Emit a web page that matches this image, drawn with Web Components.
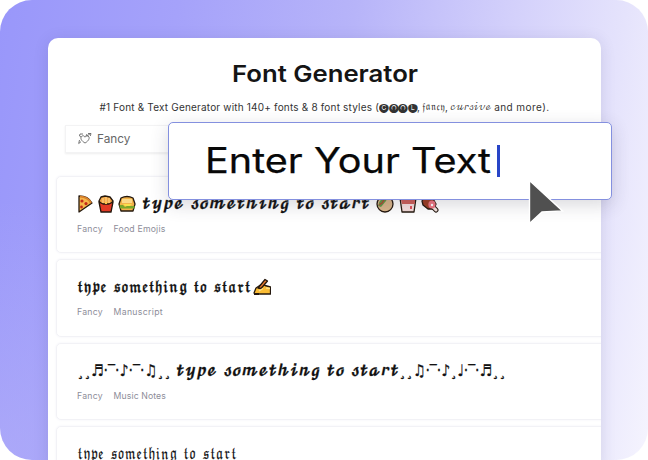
<!DOCTYPE html>
<html lang="en"><head><meta charset="utf-8"><title>Font Generator</title>
<style>html,body{margin:0;background:#fff}body{width:648px;height:460px;overflow:hidden}</style></head>
<body><font-generator></font-generator>
<script>
// Text fitted to a fixed width, by letter spacing or by horizontal scaling.
class FitText extends HTMLElement{
  constructor(){super();this.attachShadow({mode:'open'}).innerHTML=`<style>:host{display:block;flex:none;white-space:pre}span{display:inline-block;transform-origin:0 50%}</style><span><slot></slot></span>`}
  connectedCallback(){requestAnimationFrame(()=>this.fit());this.fit()}
  fit(){const s=this.shadowRoot.querySelector('span'),w=+this.getAttribute('w');this.style.width=w+'px';s.style.letterSpacing='0';s.style.transform='none';
    const n=s.getBoundingClientRect().width;if(!n)return;
    if(this.hasAttribute('stretch'))s.style.transform=`scaleX(${w/n})`;
    else s.style.letterSpacing=(w-n)/([...this.textContent].length)+'px'}
}
customElements.define('fit-text',FitText);

const O='stroke="#24180e" stroke-width="1.3" stroke-linejoin="round"';
const art={
 pizza:`<path d="M2 1 Q11 1 15 8 L2 17Z" fill="#f6b64a" ${O}/><path d="M3 1.5Q11 2 14 8" fill="none" stroke="#d9822b" stroke-width="2"/><circle cx="5" cy="6" r="1.6" fill="#c32b1b"/><circle cx="9" cy="8.6" r="1.6" fill="#c32b1b"/><circle cx="4.5" cy="12" r="1.4" fill="#c32b1b"/>`,
 fries:`<path d="M2 6L4 2 8 1 13 2 16 6 13 10H5Z" fill="#f3a345" ${O}/><path d="M6 3V8M9 2V8M12 3V8" stroke="#fbd07a" stroke-width="1.3"/><path d="M2 7L6 9H12L16 7 14 17H4Z" fill="#e23a25" ${O}/><path d="M8 7H10V9H8Z" fill="#f8c94e"/>`,
 burger:`<path d="M3 3Q9 0 15 3L17 9 15 16H3L1 9Z" fill="#f3b34a" ${O}/><path d="M4 4H14V8H4Z" fill="#fbd989"/><path d="M1.5 10H5L7 12 9 11H16.5V13.5H2Z" fill="#79a829"/><path d="M5 9H14L12 11H7Z" fill="#fae04c"/>`,
 stuffed:`<circle cx="9" cy="9" r="8" fill="#d9b58a" ${O}/><path d="M2 11Q3 3 12 2L10 6 5 12Z" fill="#629644"/><path d="M3 10L6 8 8 5" stroke="#b94232" stroke-width="1.3" fill="none"/>`,
 box:`<path d="M1 3H17L15 17H3Z" fill="#f1d9d5" ${O}/><path d="M2 5H16V9H3Z" fill="#ce5f5a"/><path d="M4 9H14V15H4Z" fill="#f8dfdf"/><path d="M11 11H13V14H11Z" fill="#e04f59"/>`,
 meat:`<path d="M1 6Q4 0 11 2L15 9 13 14H7L2 10Z" fill="#9e3d22" ${O}/><path d="M12 12L15 15" stroke="#24180e" stroke-width="5" stroke-linecap="round"/><path d="M12 12L15 15" stroke="#f4e3de" stroke-width="3" stroke-linecap="round"/><ellipse cx="11" cy="9.5" rx="3.6" ry="4" fill="#ef7682"/><circle cx="11" cy="10" r="1.2" fill="#fff"/>`,
 hand:`<path d="M1 15L3 10 9 6 12 7.5 17.5 9V16H2Z" fill="#fbbd35" ${O}/><path d="M5 10L12 1.5 14.5 3 8 10.5Z" fill="#e9792c" ${O}/><path d="M6 13L10 10.5M13 10L17 10.5" stroke="#fde08a" stroke-width="1.4"/><path d="M1 16H6" stroke="#24180e" stroke-width="2"/>`
};
class PixelEmoji extends HTMLElement{connectedCallback(){this.attachShadow({mode:'open'}).innerHTML=`<style>:host{display:block;flex:none;width:18px;height:18px}svg{display:block}</style><svg width="18" height="18" viewBox="0 0 18 18">${art[this.getAttribute('kind')]}</svg>`}}
customElements.define('pixel-emoji',PixelEmoji);

class FontCard extends HTMLElement{connectedCallback(){const tag=this.getAttribute('tag');this.attachShadow({mode:'open'}).innerHTML=`<style>
:host{display:block;box-sizing:border-box;height:77.5px;width:560px;flex:none;border:1.5px solid #f2f2f6;border-radius:5px;padding:14.5px 0 0 20.5px;box-shadow:0 0 3px #f3f3f8;background:#fff}
.line{display:flex;align-items:center;height:25px}.tags{display:flex;gap:10.5px;height:12px;margin-top:6.5px;font:8.7px/12px Inter,sans-serif;color:#8d8d99}
</style><div class="line"><slot></slot></div>${tag?`<div class="tags"><fit-text w="26">Fancy</fit-text><fit-text w="${this.getAttribute('tw')}">${tag}</fit-text></div>`:''}`}}
customElements.define('font-card',FontCard);

class TextInput extends HTMLElement{connectedCallback(){this.attachShadow({mode:'open'}).innerHTML=`<style>
:host{position:absolute;left:168px;top:121.5px;width:443.5px;height:78px;box-sizing:border-box;border:1.5px solid #8490df;border-radius:5px;background:#fff;box-shadow:0 5px 18px #34344a30;display:flex;align-items:center;padding:0 0 2px 35.5px;color:#080808;font:35px/42px Inter,sans-serif;-webkit-text-stroke:.25px #080808}
fit-text{letter-spacing:1px}i{width:3px;height:32.5px;background:#2845c7;margin:3px 0 0 6.5px}</style><fit-text w="286" stretch>Enter Your Text</fit-text><i></i>`}}
customElements.define('text-input',TextInput);

class FontGenerator extends HTMLElement{connectedCallback(){this.attachShadow({mode:'open'}).innerHTML=`<style>
:host{display:block;position:relative;box-sizing:border-box;width:648px;height:460px;padding:37.5px 47.5px 0;border-radius:32px;overflow:hidden;background:radial-gradient(circle at 0 100%,#b9b5f880,transparent 260px),linear-gradient(98deg,#9997fa 0%,#a5a2fa 25%,#b7b4f9 50%,#d3d0fb 72%,#e5e3fc 88%,#f5f4fe 100%)}
main{box-sizing:border-box;width:553px;height:430px;background:#fff;border-radius:10px 10px 0 0;box-shadow:0 2px 15px #38386322;overflow:hidden;display:flex;flex-direction:column}
h1{margin:21px 0 0 184px;font:600 23.3px/30px Inter,sans-serif;color:#151515}
.sub{display:flex;margin:10px 0 0 52px;height:16px;font:10px/16px Inter,sans-serif;color:#333}
.math{font-family:"DejaVu Math TeX Gyre","DejaVu Sans",serif;font-size:9.5px}
.pick{display:flex;align-items:center;box-sizing:border-box;margin:10px 0 0 17px;height:28px;width:300px;flex:none;padding-left:12px;gap:5.5px;border:1px solid #f3f3f4;box-shadow:0 1px 2px #eee;color:#666;font:11.8px/16px Inter,sans-serif}
.list{display:flex;flex-direction:column;gap:6px;margin:23px 0 0 8px}
font-card{color:#111;font:15.5px/24px "DejaVu Math TeX Gyre","DejaVu Sans",serif}
font-card fit-text{word-spacing:3px;margin-top:1px;-webkit-text-stroke:.3px #111}
font-card .thin{-webkit-text-stroke:.15px #111}
.g{width:4.5px}font-card .music{font-family:"DejaVu Sans",sans-serif;font-size:16px}
.pointer{position:absolute;left:527px;top:178px}
</style><main><h1><fit-text w="186" stretch>Font Generator</fit-text></h1>
<div class="sub"><fit-text w="279.5">#1 Font &amp; Text Generator with 140+ fonts &amp; 8 font styles (</fit-text><fit-text w="38" stretch style="font-family:'DejaVu Sans'">🅒🅞🅞🅛</fit-text><fit-text w="5">, </fit-text><fit-text w="23" stretch class="math">𝔣𝔞𝔫𝔠𝔶</fit-text><fit-text w="5">, </fit-text><fit-text w="41" class="math" style="font-size:9px;padding-top:1px">𝒸𝓊𝓇𝓈𝒾𝓋ℯ</fit-text><fit-text w="58.5"> and more).</fit-text></div>
<div class="pick"><svg width="14" height="13" viewBox="0 0 14 13" fill="none" stroke="#666" stroke-width=".9"><path d="M7 11C3.5 9 2 6.5 3.5 4.5 5 3 6.5 4 7 5.2 8 3.5 10 3.2 11 5 11.8 7 9.5 9.8 7 11Z"/><path d="M3 5L1.5 4 2 2 5 2M1.5 8L.7 11.5 3 9.7M10 1.5H13L12.3 4M8 4L9 2M9 4L12.5 1.5"/></svg><fit-text w="33.5">Fancy</fit-text></div>
<div class="list">
<font-card tag="Food Emojis" tw="52"><pixel-emoji kind="pizza"></pixel-emoji><span style="width:2px"></span><pixel-emoji kind="fries"></pixel-emoji><span style="width:3px"></span><pixel-emoji kind="burger"></pixel-emoji><span style="width:6px"></span><fit-text w="228" stretch>𝓽𝔂𝓹𝓮 𝓼𝓸𝓶𝓮𝓽𝓱𝓲𝓷𝓰 𝓽𝓸 𝓼𝓽𝓪𝓻𝓽</fit-text><span style="width:6px"></span><pixel-emoji kind="stuffed"></pixel-emoji><span class="g"></span><pixel-emoji kind="box"></pixel-emoji><span class="g"></span><pixel-emoji kind="meat"></pixel-emoji></font-card>
<font-card tag="Manuscript" tw="49.5"><fit-text w="174" stretch>𝖙𝖞𝖕𝖊 𝖘𝖔𝖒𝖊𝖙𝖍𝖎𝖓𝖌 𝖙𝖔 𝖘𝖙𝖆𝖗𝖙</fit-text><span style="width:2px"></span><pixel-emoji kind="hand"></pixel-emoji></font-card>
<font-card tag="Music Notes" tw="52.5"><fit-text class="music" w="94" stretch>¸¸♬·‾·♪·‾·♫¸¸</fit-text><span style="width:5px"></span><fit-text w="223" stretch>𝓽𝔂𝓹𝓮 𝓼𝓸𝓶𝓮𝓽𝓱𝓲𝓷𝓰 𝓽𝓸 𝓼𝓽𝓪𝓻𝓽</fit-text><fit-text class="music" w="107" stretch>¸¸♫·‾·♪¸♩·‾·♬¸¸</fit-text></font-card>
<font-card><fit-text class="thin" w="160" stretch>𝔱𝔶𝔭𝔢 𝔰𝔬𝔪𝔢𝔱𝔥𝔦𝔫𝔤 𝔱𝔬 𝔰𝔱𝔞𝔯𝔱</fit-text></font-card>
</div></main><text-input></text-input>
<svg class="pointer" width="38" height="48" viewBox="0 0 38 48"><path d="M2.5 2.5V45.5L15 34 35.5 33Z" fill="#505050" stroke="#fff" stroke-width="1.4"/></svg>`}}
customElements.define('font-generator',FontGenerator);
</script></body></html>
